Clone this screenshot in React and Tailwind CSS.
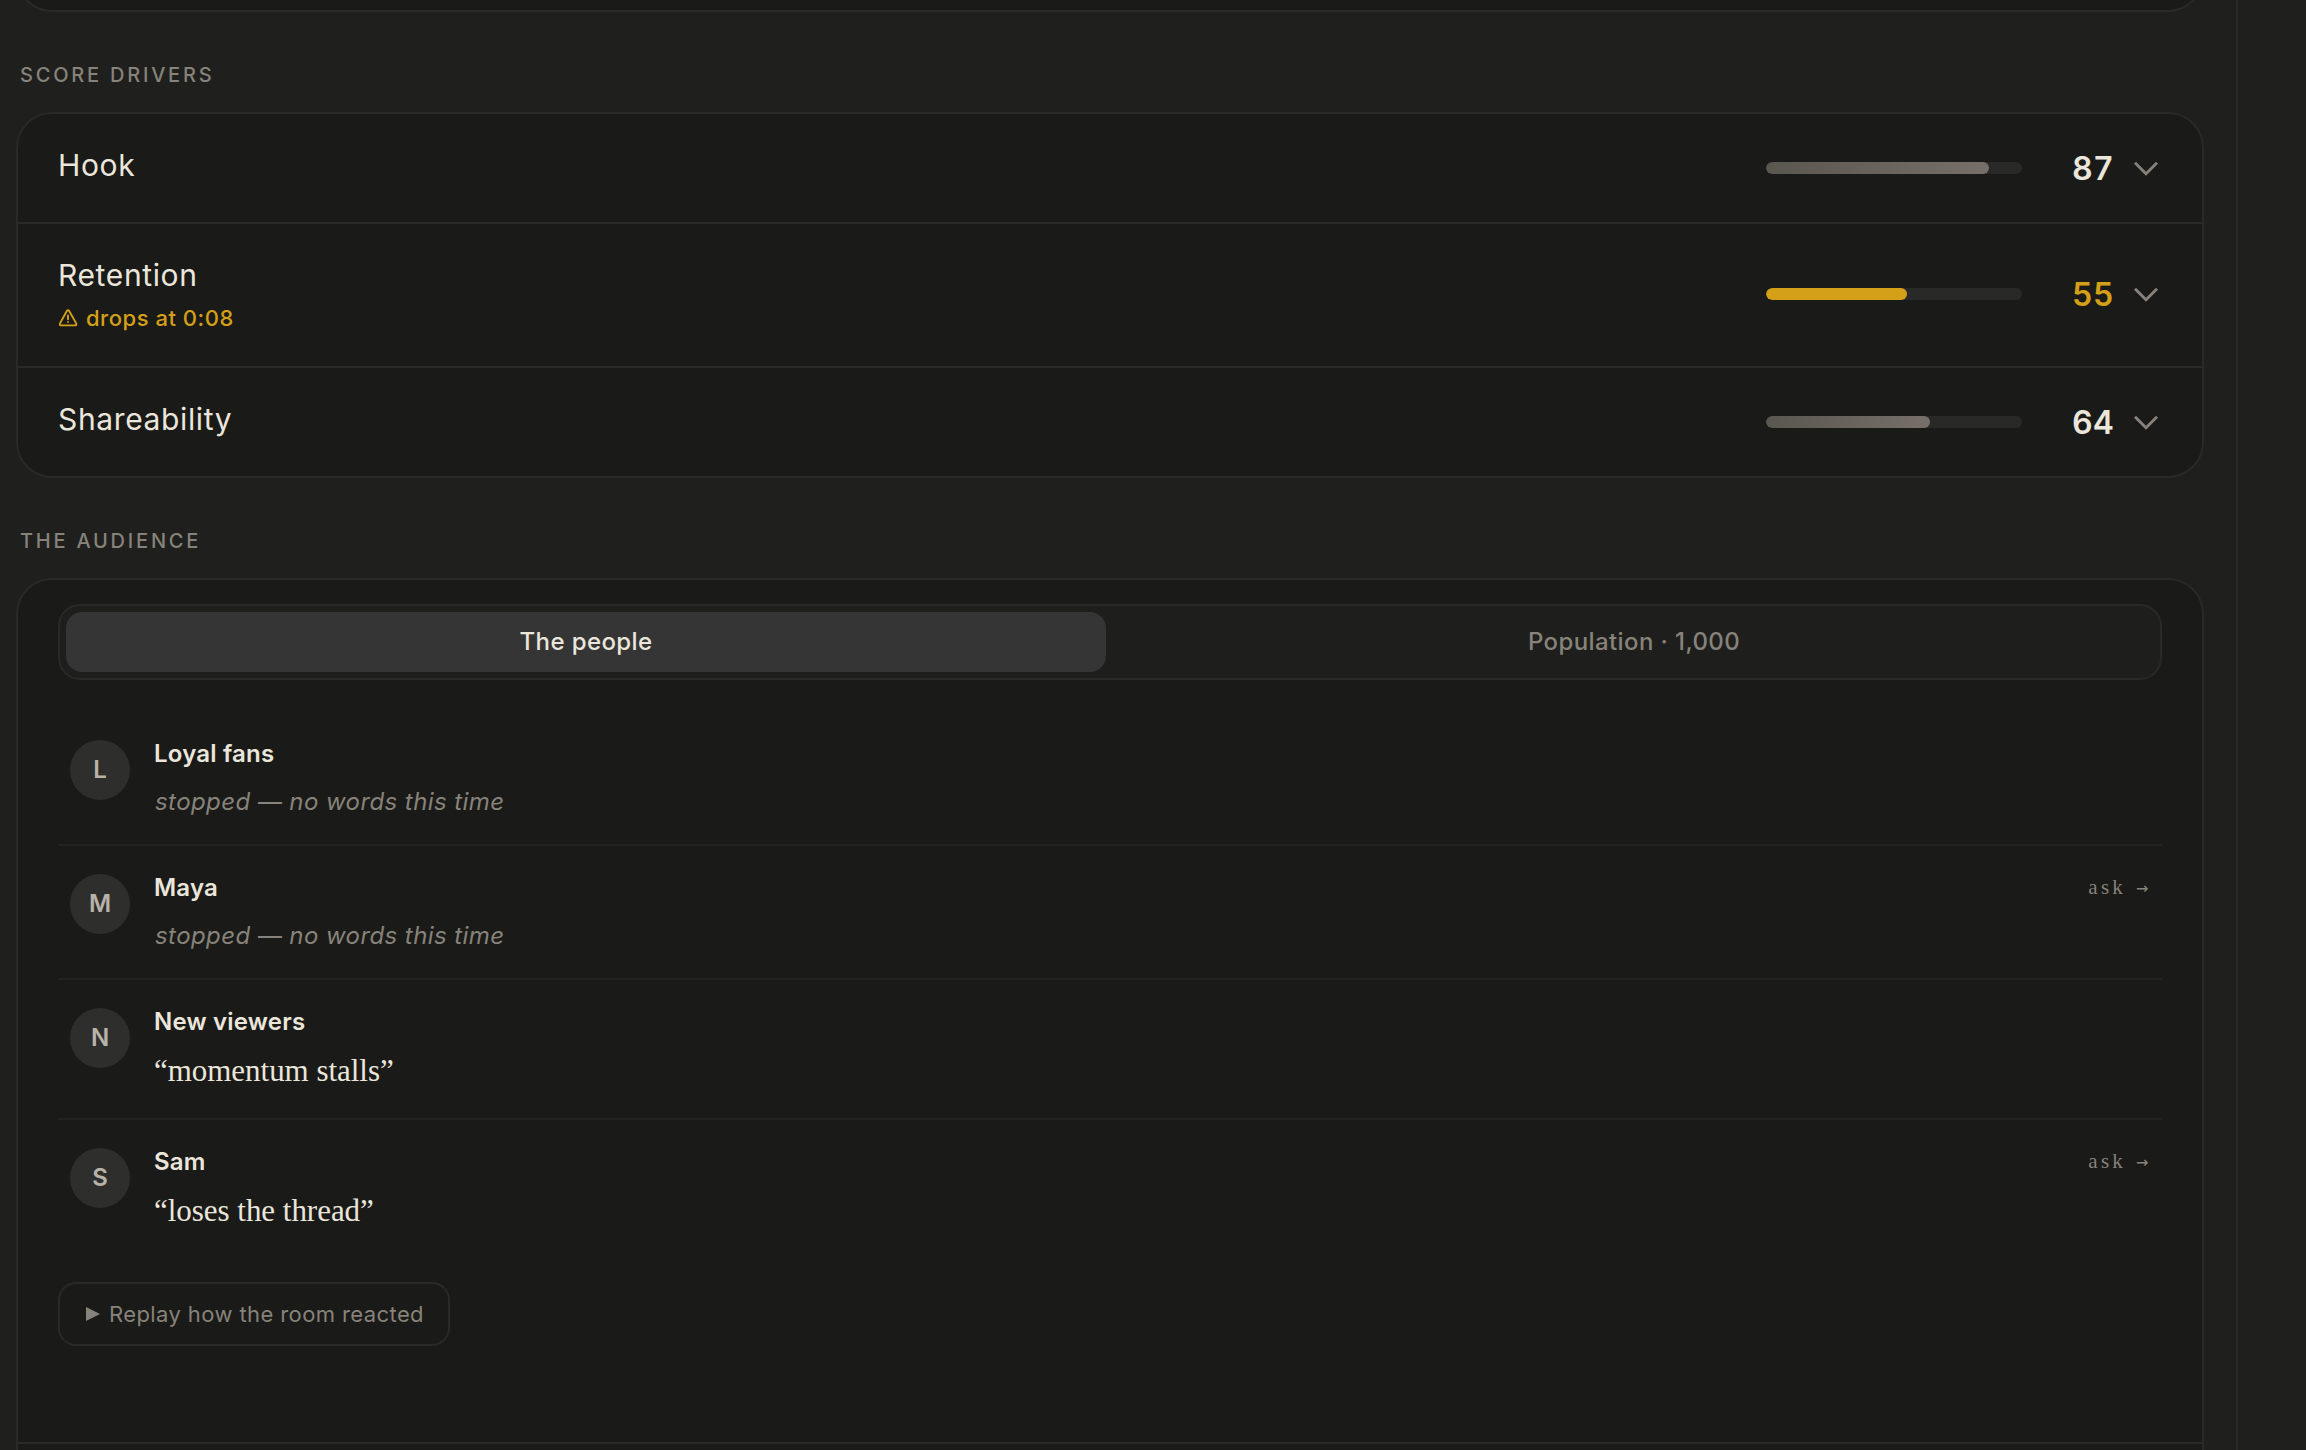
const DRIVERS = [
    { name: "Hook", score: 87 },
    { name: "Retention", score: 55, warning: "drops at 0:08" },
    { name: "Shareability", score: 64 },
];

const PEOPLE = [
    { name: "Loyal fans" },
    { name: "Maya", canAsk: true },
    { name: "New viewers", quote: "momentum stalls" },
    { name: "Sam", quote: "loses the thread", canAsk: true },
];

const WarningIcon = () => (
    <svg width="20" height="20" viewBox="0 0 20 20" fill="none" stroke="currentColor" strokeWidth="1.9" strokeLinejoin="round" strokeLinecap="round">
        <path d="M8.8 3 L2 15.4 Q1.4 17.4 3.2 17.4 L17 17.4 Q18.8 17.4 18.2 15.4 L11.2 3 Q10 1.4 8.8 3 Z" />
        <path d="M10 7.5 V11.3 M10 14 V14.1" />
    </svg>
);

const Chevron = () => (
    <svg width="32" height="32" viewBox="0 0 32 32" fill="none" stroke="currentColor" strokeWidth="2.9" className="text-[#87817a]">
        <path d="M5 10.8 L16 21.8 L27 10.8" />
    </svg>
);

const SectionTitle = ({ children }) => (
    <h2 className="pl-1 text-[20px] leading-[24px] font-medium tracking-[2.78px] uppercase text-[#87837a]">{children}</h2>
);

const DriverRow = ({ name, score, warning }) => (
    <div className="flex justify-between border-b-2 border-[#292928] px-10 last:border-b-0">
        <div className="pt-7 pb-8">
            <div className="h-12 text-[30px] leading-[46px] tracking-[0.63px]">{name}</div>
            {warning && (
                <div className="flex h-[34px] items-center gap-2 pt-0.5 text-[22px] font-medium tracking-[0.52px] text-[#d4a017]">
                    <WarningIcon />
                    <span>{warning}</span>
                </div>
            )}
        </div>
        <div className={warning ? "flex items-center pb-0.5" : "flex items-center"}>
            <div className="h-3 w-64 overflow-hidden rounded-full bg-[#292928]">
                <div
                    className={warning ? "h-3 rounded-full bg-[#d4a017]" : "h-3 rounded-full bg-linear-to-r from-[#5a574f] to-[#767069]"}
                    style={{ width: `${score}%` }}
                />
            </div>
            <span className={warning ? "w-[92px] pt-0.5 text-right text-[32px] font-semibold tracking-[0.3px] tabular-nums text-[#d4a017]" : "w-[92px] pt-0.5 text-right text-[32px] font-semibold tracking-[0.3px] tabular-nums"}>{score}</span>
            <span className="ml-4"><Chevron /></span>
        </div>
    </div>
);

const PersonRow = ({ name, quote, canAsk }) => (
    <div className="flex border-b-2 border-[#232322] px-3 py-6 last:border-b-0">
        <div className="mt-1 flex size-[60px] items-center justify-center rounded-full bg-[#2e2e2d] text-[24px] font-semibold text-[#b8b3a8]">{name[0]}</div>
        <div className="ml-6 flex-1">
            <div className="text-[24px] leading-[36px] font-semibold tracking-[0.2px]">{name}</div>
            {quote ? (
                <p className="mt-2 h-[46px] font-['Liberation_Serif',serif] text-[31px] leading-[46px] tracking-[-0.03px]">“{quote}”</p>
            ) : (
                <p className="mt-2 h-10 pl-px text-[24px] leading-[43px] tracking-[0.42px] italic text-[#87837a]">stopped — no words this time</p>
            )}
        </div>
        {canAsk && (
            <button className="flex h-9 items-center pr-0.5 text-[#87837a]">
                <span className="font-['Liberation_Serif',serif] text-[21px] tracking-[3.2px]">ask</span>
                <span className="mb-[3px] ml-2.5 font-['DejaVu_Sans_Mono',monospace] text-[20px]">→</span>
            </button>
        )}
    </div>
);

export default function App() {
    return (
        <div className="flex h-[1450px] w-[2306px] overflow-hidden bg-[#1f1f1d] font-[Inter,sans-serif] text-[#ebe6dc]">
            <main className="w-[2238px] shrink-0 border-r-2 border-[#292928] pr-8 pl-4">
                <div className="h-3 overflow-hidden">
                    <div className="-mt-20 h-[92px] rounded-[36px] border-2 border-[#292928] bg-[#1a1a18]" />
                </div>

                <section className="pt-[51px]">
                    <SectionTitle>Score drivers</SectionTitle>
                    <div className="mt-[25px] overflow-hidden rounded-[36px] border-2 border-[#292928] bg-[#1a1a18]">
                        {DRIVERS.map((driver) => <DriverRow key={driver.name} {...driver} />)}
                    </div>
                </section>

                <section className="pt-[51px]">
                    <SectionTitle>The audience</SectionTitle>
                    <div className="mt-[25px] h-[1000px] rounded-[36px] border-2 border-[#292928] bg-[#1a1a18] pt-6">
                        <div className="h-[840px] border-b-2 border-[#292928] px-10">
                            <div className="grid h-[76px] grid-cols-2 gap-2 rounded-[22px] border-2 border-[#292928] bg-[#1e1e1c] p-1.5 text-[24px]">
                                <button className="rounded-2xl bg-[#353535] font-medium tracking-[0.4px]">The people</button>
                                <button className="font-medium tracking-[0.4px] text-[#87837a]">Population · 1,000</button>
                            </div>
                            <div className="mt-8">
                                {PEOPLE.map((person) => <PersonRow key={person.name} {...person} />)}
                            </div>
                            <button className="mt-6 flex h-16 w-[392px] items-center rounded-[18px] border-2 border-[#292928] pl-[26px] text-[22px] tracking-[0.4px] text-[#87837a]">
                                <svg width="14" height="14" viewBox="0 0 14 14" fill="currentColor"><path d="M0 0 L14 7 L0 14 Z" /></svg>
                                <span className="ml-[9px]">Replay how the room reacted</span>
                            </button>
                        </div>
                    </div>
                </section>
            </main>
        </div>
    );
}
